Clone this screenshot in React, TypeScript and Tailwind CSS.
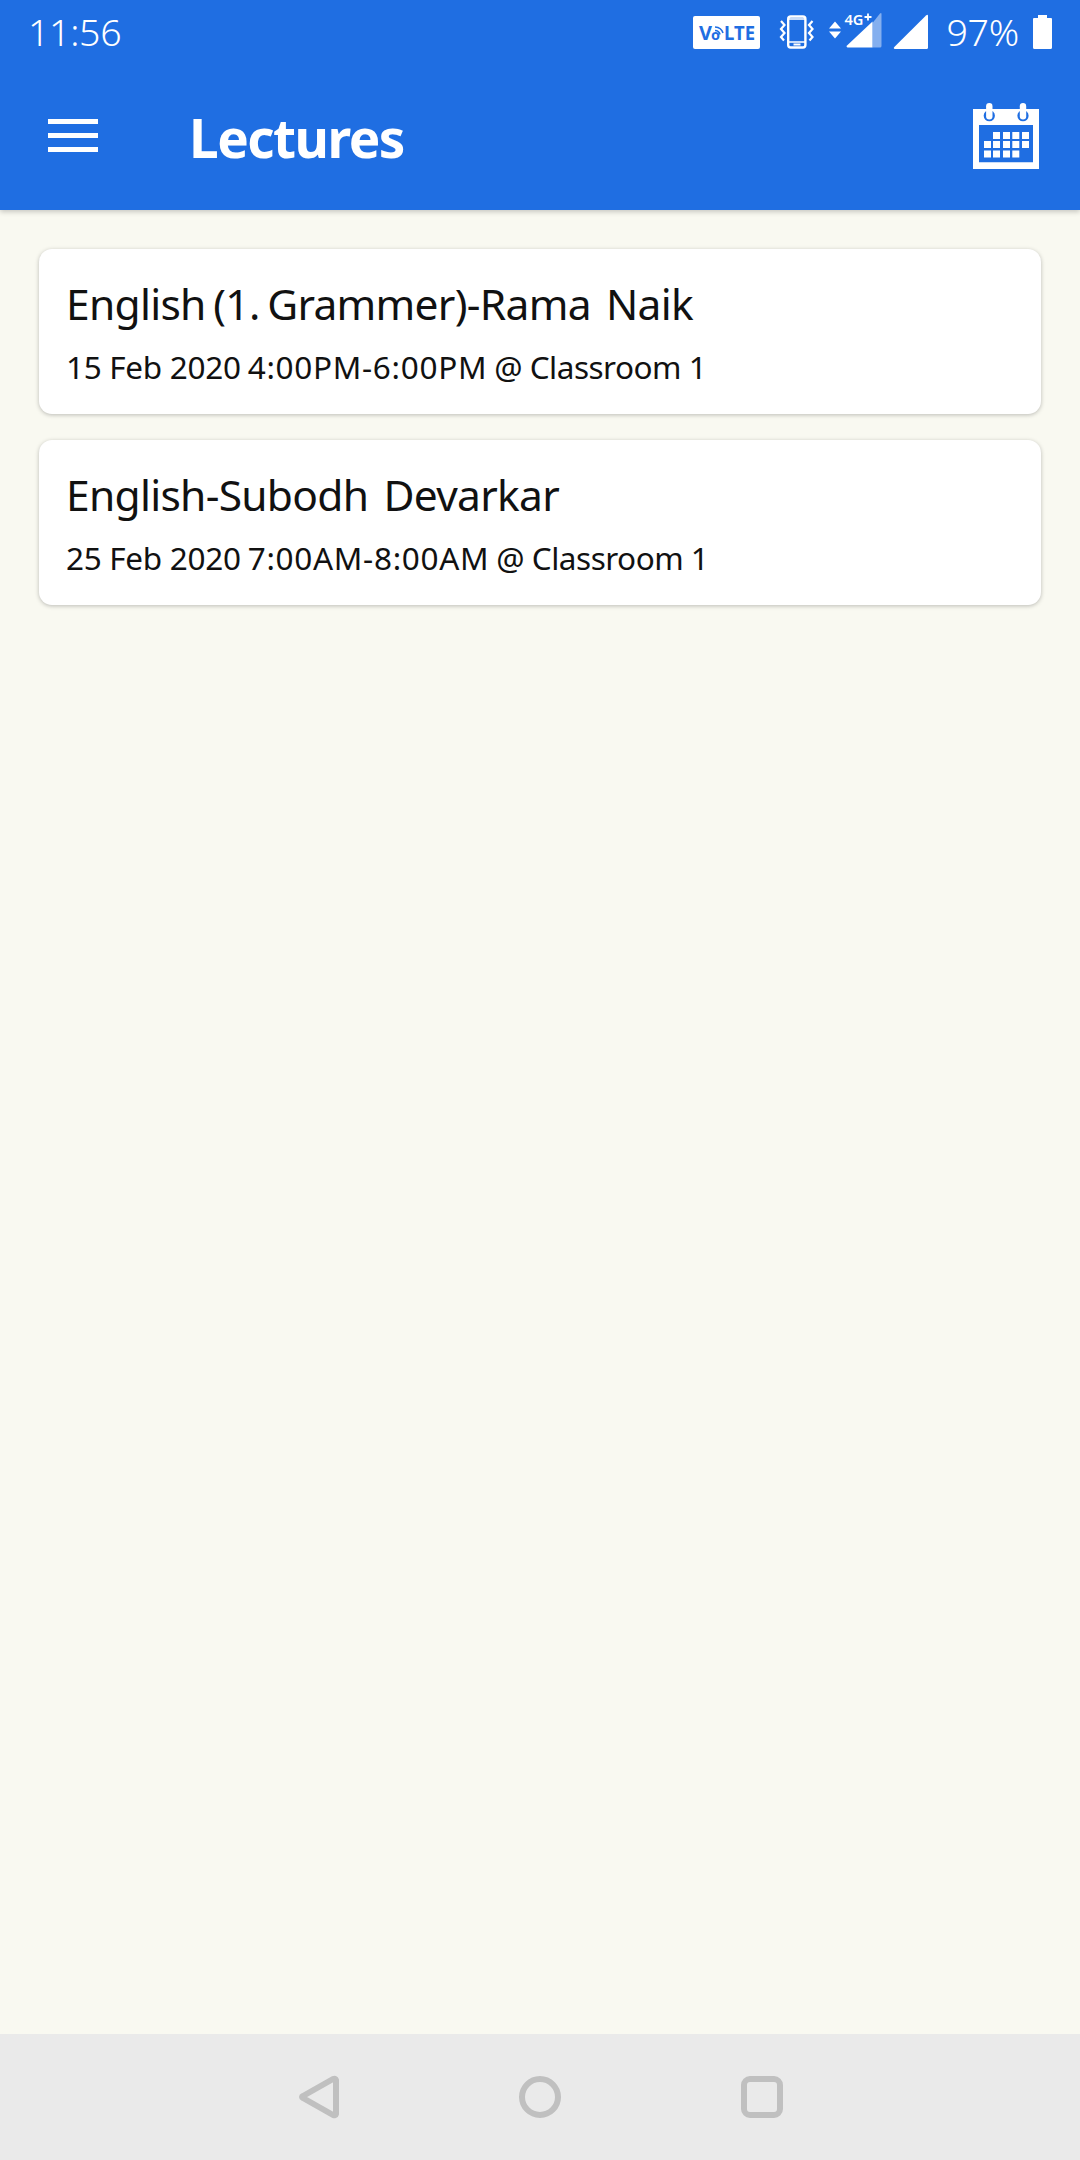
const lectures = [
  {
    title: "English (1. Grammer)-Rama  Naik",
    date: "15 Feb 2020",
    time: "4:00PM-6:00PM",
    place: "@ Classroom 1",
  },
  {
    title: "English-Subodh  Devarkar",
    date: "25 Feb 2020",
    time: "7:00AM-8:00AM",
    place: "@ Classroom 1",
  },
];

const calendarDays = [
  [53, 52], [63, 52], [72.3, 52], [82, 52],
  [44, 61], [53, 61], [63, 61], [72.3, 61], [82, 61],
  [44, 70.5], [53, 70.5], [63, 70.5], [72.3, 70.5],
];

function VolteIcon() {
  return (
    <svg width="67" height="33" viewBox="0 0 67 33">
      <rect width="67" height="33" rx="2" fill="#fff" />
      <g fill="#1f6ee2" fontFamily="Noto Sans, sans-serif" fontWeight="700">
        <text x="6" y="23.5" fontSize="19" textLength="13" lengthAdjust="spacingAndGlyphs">V</text>
        <text x="18" y="23.5" fontSize="14" textLength="9" lengthAdjust="spacingAndGlyphs">o</text>
        <text x="31" y="23.5" fontSize="19" textLength="31" lengthAdjust="spacingAndGlyphs">LTE</text>
      </g>
      <path d="M22 14.5q4 0 5 4M22 11q6.500 .5 8 6" fill="none" stroke="#1f6ee2" strokeWidth="1.600" />
    </svg>
  );
}

function VibrateIcon() {
  return (
    <svg width="36" height="34" viewBox="0 0 36 34" fill="none" stroke="#fff">
      <rect x="9.200" y="1.500" width="17.200" height="31" rx="2.500" strokeWidth="2.400" />
      <path d="M9 4h17M9 27h17" strokeWidth="1.500" />
      <path d="M14.500 29.500h7" strokeWidth="2" />
      <path d="M2 6l3.500 4L2 14l3.500 4L2 22l3 3.500M33.500 6L30 10l3.500 4L30 18l3.500 4-3 3.500" strokeWidth="2.200" />
    </svg>
  );
}

function MobileDataIcon() {
  return (
    <svg className="overflow-visible" width="54" height="38" viewBox="0 0 54 38" fill="#fff">
      <path d="M6 10.500L12 17.500H0zM0 20.500h12l-6 7z" />
      <path d="M43.500 12l7.500-9.500q1.500-1 1.500 .5V35q0 1.500-1.500 1.500h-7.500z" fillOpacity=".45" />
      <path d="M43.500 10.500v26H18.500q-1.800-.5-.5-2z" />
      <text x="15.500" y="14" fontSize="15" fontWeight="600" fontFamily="Noto Sans, sans-serif" textLength="19" lengthAdjust="spacingAndGlyphs">4G</text>
      <path d="M35.500 6h7M39 2.500v7" stroke="#fff" strokeWidth="1.800" />
    </svg>
  );
}

function CalendarIcon() {
  return (
    <svg width="66" height="66" viewBox="33 23 66 66">
      <path d="M33 29h66v60H33zM39 45v37.300h54V45z" fill="#fff" fillRule="evenodd" />
      <circle cx="49.300" cy="35.700" r="5.600" fill="#1f6ee2" />
      <circle cx="83" cy="35.700" r="5.600" fill="#1f6ee2" />
      <rect x="46.100" y="23" width="6.400" height="16.500" rx="3.200" fill="#fff" />
      <rect x="79.800" y="23" width="6.400" height="16.500" rx="3.200" fill="#fff" />
      {calendarDays.map(([x, y]) => (
        <rect key={`${x}-${y}`} x={x} y={y} width="7" height="7" fill="#fff" />
      ))}
    </svg>
  );
}

function StatusBar() {
  return (
    <div className="flex h-16 items-center pl-7 pr-7 text-white">
      <span className="text-[37.500px] font-light leading-none tracking-[-0.300px]">11:56</span>
      <div className="ml-auto flex items-center">
        <VolteIcon />
        <div className="ml-[19px]">
          <VibrateIcon />
        </div>
        <div className="-mt-1 ml-[14px]">
          <MobileDataIcon />
        </div>
        <svg className="ml-[10px]" width="36" height="36" viewBox="0 0 36 36">
          <path d="M33 1.500q2-1.500 2 .5v31.500q0 1.500-1.500 1.500H2q-2-.3-.7-2z" fill="#fff" />
        </svg>
        <span className="ml-[18px] w-[73px] whitespace-nowrap text-[37.500px] font-light leading-none tracking-[-0.300px]">
          97%
        </span>
        <svg className="ml-[13.500px]" width="19" height="34" viewBox="0 0 19 34">
          <path d="M5 0h9v3h4q1 0 1 1v28.500q0 1.500-1.500 1.500h-16Q0 34 0 32.500V4q0-1 1-1h4z" fill="#fff" />
        </svg>
      </div>
    </div>
  );
}

function NavBar() {
  return (
    <nav className="flex h-[126px] items-center justify-center bg-[#eaeaea]">
      <svg width="486" height="44" viewBox="0 0 486 44" fill="none" stroke="#c0c0c0" strokeWidth="6" strokeLinejoin="round">
        <path d="M39 5v34q-.5 2-3 1L6 23q-2-1 0-2L36 4q2.500-1 3 1z" />
        <circle cx="243" cy="22" r="18" />
        <rect x="447" y="4" width="36" height="36" rx="6" />
      </svg>
    </nav>
  );
}

export default function App() {
  return (
    <div className="flex h-[2160px] w-[1080px] flex-col bg-[#f9f9f1] font-['Noto_Sans',sans-serif]">
      <header className="h-[210px] bg-[#1f6ee2] shadow-[0_2px_5px_rgba(0,0,0,0.2)]">
        <StatusBar />
        <div className="flex h-[146px] items-start pl-12 pr-[41px]">
          <div className="mt-[55px] flex w-[50px] flex-col gap-[9px]">
            <span className="h-[5px] bg-white" />
            <span className="h-[5px] bg-white" />
            <span className="h-[5px] bg-white" />
          </div>
          <h1 className="mt-[47px] ml-[91px] text-[53px] font-bold leading-none tracking-[-1.500px] text-white">
            Lectures
          </h1>
          <div className="mt-[39px] ml-auto">
            <CalendarIcon />
          </div>
        </div>
      </header>

      <main className="flex flex-1 flex-col gap-[26px] px-[39px] pt-[39px]">
        {lectures.map((lecture) => (
          <div
            key={lecture.title}
            className="h-[165px] rounded-[13px] bg-white px-[27px] pt-[27px] text-[#111] shadow-[0_1px_4px_rgba(0,0,0,0.25)]"
          >
            <h2 className="whitespace-pre text-[42.500px] leading-[56px] tracking-[-0.700px] [word-spacing:-2.800px]">
              {lecture.title}
            </h2>
            <p className="mt-[14px] flex gap-[7px] whitespace-nowrap text-[31.500px] leading-[42px] tracking-[-0.300px]">
              <span>{lecture.date}</span>
              <span className="tracking-[0.700px]">{lecture.time}</span>
              <span className="tracking-[-0.500px]">{lecture.place}</span>
            </p>
          </div>
        ))}
      </main>

      <NavBar />
    </div>
  );
}
